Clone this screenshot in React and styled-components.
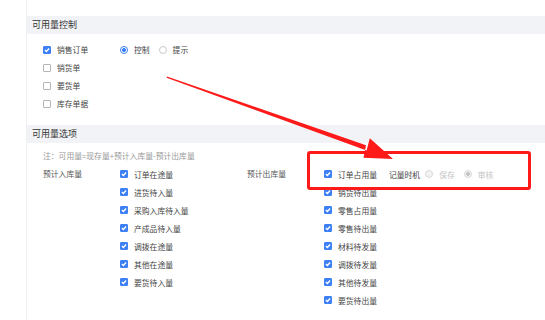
import React from 'react';
import styled, { createGlobalStyle } from 'styled-components';

const GlobalStyle = createGlobalStyle`
  html, body {
    margin: 0;
    padding: 0;
    background: #fff;
  }
  body {
    font-family: "Noto Sans CJK SC", "Noto Sans", sans-serif;
    color: #444;
    font-size: 7.8px;
  }
`;

const inbound = ['订单在途量', '进货待入量', '采购入库待入量', '产成品待入量', '调拨在途量', '其他在途量', '要货待入量'];
const outbound = ['订单占用量', '销货待出量', '零售占用量', '零售待出量', '材料待发量', '调拨待发量', '其他待发量', '要货待出量'];

export default function App() {
  return (
    <>
      <GlobalStyle />
      <Page>
        <Rail />
        <Main>
          <SectionHeader>可用量控制</SectionHeader>
          <ControlBody>
            <Row>
              <CheckItem checked label="销售订单" />
              <Radio checked label="控制" />
              <Radio label="提示" />
            </Row>
            <Row><CheckItem label="销货单" /></Row>
            <Row><CheckItem label="要货单" /></Row>
            <Row><CheckItem label="库存单据" /></Row>
          </ControlBody>

          <SectionHeader>可用量选项</SectionHeader>
          <OptionBody>
            <Note>注：可用量=现存量+预计入库量-预计出库量</Note>
            <Groups>
              <Group>
                <GroupLabel>预计入库量</GroupLabel>
                <List>
                  {inbound.map((t) => (
                    <Row key={t}><CheckItem checked label={t} /></Row>
                  ))}
                </List>
              </Group>
              <Group>
                <GroupLabel>预计出库量</GroupLabel>
                <List>
                  {outbound.map((t, i) => (
                    <Row key={t}>
                      <CheckItem checked label={t} auto={i === 0} />
                      {i === 0 && (
                        <>
                          <Timing>记量时机</Timing>
                          <Radio disabled label="保存" />
                          <Radio disabled checked label="审核" />
                        </>
                      )}
                    </Row>
                  ))}
                </List>
              </Group>
            </Groups>
          </OptionBody>
        </Main>
        <Highlight />
        <Arrow viewBox="0 0 545 320">
          <polygon points="167,76.4 366,145.3 363.5,157.8 393,159 369.8,138.2 366.6,150.6 166.6,77.8" fill="#ff1a1a" />
        </Arrow>
      </Page>
    </>
  );
}

function CheckItem({ checked, label, auto }) {
  return (
    <CheckWrap $auto={auto}>
      <Box $checked={checked}>
        {checked && (
          <svg width="6" height="6" viewBox="0 0 6 6">
            <path d="M0.9 3 L2.4 4.4 L5.1 1.5" stroke="#fff" strokeWidth="1.4" fill="none" />
          </svg>
        )}
      </Box>
      <span>{label}</span>
    </CheckWrap>
  );
}

function Radio({ checked, disabled, label }) {
  return (
    <RadioWrap $disabled={disabled}>
      <Circle $checked={checked} $disabled={disabled} />
      <span>{label}</span>
    </RadioWrap>
  );
}

const Page = styled.div`
  position: relative;
  display: flex;
  width: 545px;
  height: 320px;
  overflow: hidden;
`;

const Rail = styled.div`
  width: 26px;
  flex-shrink: 0;
  border-right: 1px solid #eef0f3;
`;

const Main = styled.div`
  flex: 1;
  padding-top: 16px;
`;

const SectionHeader = styled.div`
  height: 18px;
  line-height: 18px;
  padding-left: 5px;
  background: #f2f3f7;
  font-size: 9px;
  color: #333;
`;

const ControlBody = styled.div`
  padding: 6.5px 0 12.5px 16px;
`;

const OptionBody = styled.div`
  padding: 4px 0 0 16px;
`;

const Row = styled.div`
  display: flex;
  align-items: center;
  height: 18px;
  white-space: nowrap;
`;

const Note = styled.div`
  height: 18px;
  line-height: 18px;
  color: #999;
`;

const Groups = styled.div`
  display: flex;
`;

const Group = styled.div`
  display: flex;
  flex: none;
  width: 204px;

  &:last-child {
    width: auto;
  }
`;

const GroupLabel = styled.div`
  width: 77px;
  flex: none;
  line-height: 18px;
  color: #555;
`;

const List = styled.div`
  display: flex;
  flex-direction: column;
`;

const CheckWrap = styled.label`
  display: flex;
  align-items: center;
  gap: 6px;
  flex: none;
  width: ${(p) => (p.$auto ? 'auto' : '77px')};
  color: #444;
`;

const Box = styled.span`
  display: flex;
  align-items: center;
  justify-content: center;
  box-sizing: border-box;
  width: 8px;
  height: 8px;
  border-radius: 1px;
  background: ${(p) => (p.$checked ? '#3d7ff5' : '#fff')};
  border: 1px solid ${(p) => (p.$checked ? '#3d7ff5' : '#b5b5b5')};
`;

const RadioWrap = styled.label`
  display: flex;
  align-items: center;
  gap: 6px;
  margin-right: 9px;
  color: ${(p) => (p.$disabled ? '#c4c4c4' : '#444')};
`;

const Circle = styled.span`
  box-sizing: border-box;
  width: 8px;
  height: 8px;
  border-radius: 50%;
  border: 1px solid ${(p) => (p.$disabled ? '#d9d9d9' : p.$checked ? '#3d7ff5' : '#c8c8c8')};
  background: ${(p) =>
    p.$checked
      ? `radial-gradient(circle, ${p.$disabled ? '#c4c4c4' : '#3d7ff5'} 0 1.8px, ${p.$disabled ? '#f3f3f3' : '#fff'} 2.2px)`
      : p.$disabled
      ? '#f3f3f3'
      : '#fff'};
`;

const Timing = styled.span`
  margin: 0 5px 0 12px;
  color: #444;
`;

const Highlight = styled.div`
  position: absolute;
  left: 307px;
  top: 151px;
  width: 224px;
  height: 39px;
  box-sizing: border-box;
  border: 3px solid #ff1a1a;
  border-radius: 3px;
  pointer-events: none;
`;

const Arrow = styled.svg`
  position: absolute;
  left: 0;
  top: 0;
  width: 545px;
  height: 320px;
  pointer-events: none;
`;
